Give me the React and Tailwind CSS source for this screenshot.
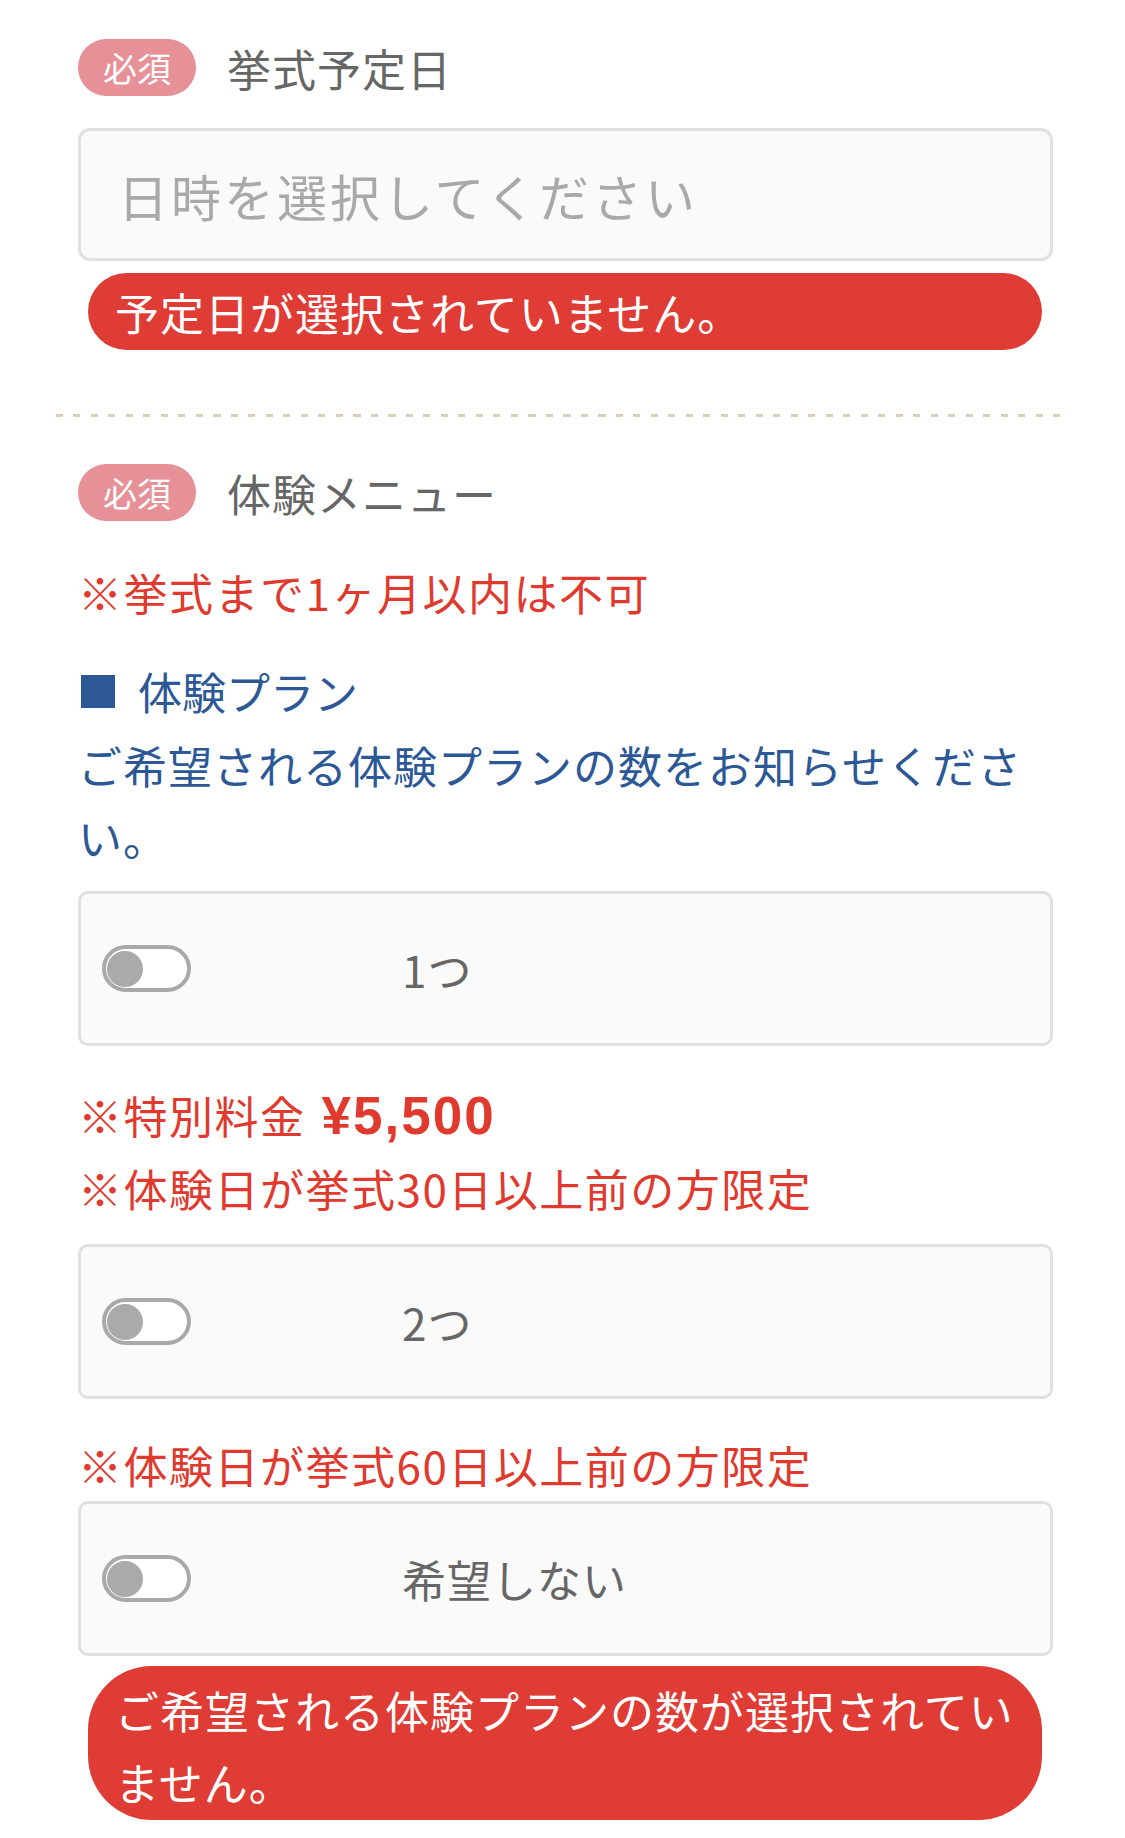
import React from "react";

function Badge() {
  return (
    <span className="flex h-[57px] w-[118px] shrink-0 items-center justify-center rounded-full bg-[#e69197] text-[34px] leading-none text-white">
      必須
    </span>
  );
}

function Toggle() {
  return (
    <span className="relative flex h-[47px] w-[89px] shrink-0 items-center rounded-full border-[4px] border-[#a9a9a9] bg-white">
      <span className="ml-[1px] h-[36px] w-[36px] rounded-full bg-[#aaaaaa]" />
    </span>
  );
}

function Option({ label }) {
  return (
    <div className="flex h-[155px] items-center rounded-[10px] border-[3px] border-[#e0e0e0] bg-[#fafafa] pl-[21px]">
      <Toggle />
      <span className="ml-[211px] text-[44px] leading-none tracking-[1px] text-[#666666]">{label}</span>
    </div>
  );
}

export default function App() {
  return (
    <div className="min-h-[1838px] bg-white pl-[78px] pr-[72px] pt-[39px] font-['Noto_Sans_CJK_JP',sans-serif]">
      {/* 挙式予定日 */}
      <div className="flex items-center gap-[31px]">
        <Badge />
        <span className="text-[44px] leading-none tracking-[1px] text-[#666666]">挙式予定日</span>
      </div>
      <div className="mt-[32px] flex h-[133px] items-center rounded-[12px] border-[3px] border-[#e0e0e0] bg-[#fafafa] pl-[37px]">
        <span className="text-[50px] leading-none tracking-[3px] text-[#a9a9a9]">日時を選択してください</span>
      </div>
      <div className="ml-[10px] mr-[11px] mt-[12px] h-[77px] rounded-full bg-[#df3c35] pl-[27px] pt-[3px] text-[44px] leading-[72px] tracking-[1px] text-white">
        予定日が選択されていません。
      </div>

      <div className="-ml-[22px] -mr-[17px] mt-[64px] h-[3px] bg-[repeating-linear-gradient(90deg,#d6d0b9_0px,#d6d0b9_7px,transparent_7px,transparent_17.5px)]" />

      {/* 体験メニュー */}
      <div className="mt-[47px] flex items-center gap-[31px]">
        <Badge />
        <span className="text-[44px] leading-none tracking-[1px] text-[#666666]">体験メニュー</span>
      </div>
      <p className="mt-[35px] text-[44px] leading-[72px] tracking-[1.5px] text-[#e03a2e]">※挙式まで1ヶ月以内は不可</p>

      <p className="mt-[27px] flex items-center text-[44px] leading-[72px] text-[#2c5896]">
        <span className="ml-[3px] mr-[23px] inline-block h-[33px] w-[34px] bg-[#2c5896]" />
        体験プラン
      </p>
      <p className="mt-[2px] text-[44px] leading-[72px] tracking-[1px] text-[#2c5896]">
        ご希望される体験プランの数をお知らせください。
      </p>

      <div className="mt-[18px]">
        <Option label="1つ" />
      </div>

      <div className="mt-[33px] text-[44px] leading-[72px] tracking-[1.5px] text-[#e03a2e]">
        <p className="flex items-baseline">
          <span>※特別料金</span>
          <span className="ml-[16px] font-['Liberation_Sans',Arial,sans-serif] text-[53px] font-bold tracking-[2px]">¥5,500</span>
        </p>
        <p>※体験日が挙式30日以上前の方限定</p>
      </div>

      <div className="mt-[20px]">
        <Option label="2つ" />
      </div>

      <p className="mt-[30px] text-[44px] leading-[72px] tracking-[1.5px] text-[#e03a2e]">※体験日が挙式60日以上前の方限定</p>

      <div className="mt-0">
        <Option label="希望しない" />
      </div>

      <div className="ml-[10px] mr-[11px] mt-[10px] rounded-[64px] bg-[#df3c35] pb-[2px] pl-[27px] pr-[20px] pt-[8px] text-[44px] leading-[72px] tracking-[1px] text-white">
        ご希望される体験プランの数が選択されていません。
      </div>
    </div>
  );
}
